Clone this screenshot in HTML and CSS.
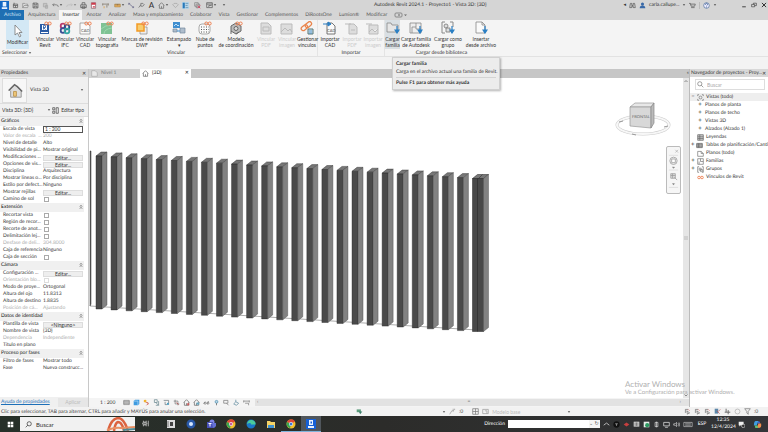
FILE: index.html
```html
<!DOCTYPE html>
<html lang="es">
<head>
  <meta charset="UTF-8">
  <title>Autodesk Revit 2024.1 - Proyecto1 - Vista 3D: {3D}</title>
  <link rel="stylesheet" href="styles.css">
</head>
<body>

  <!-- iconos compartidos -->
  <svg class="sprite" aria-hidden="true">
    <symbol id="chain" viewBox="0 0 8 5"><g fill="none" stroke="#ee8052" stroke-width="1"><circle cx="2.3" cy="2.5" r="1.5"/><circle cx="5.7" cy="2.5" r="1.5"/></g></symbol>
    <symbol id="arrow" viewBox="0 0 6 8"><path d="M3 0v6M1 4l2 3 2-3z" fill="#2a7fc4" stroke="#2a7fc4" stroke-width="1.2"/></symbol>
    <symbol id="caret" viewBox="0 0 4 4"><path d="M0.8 1.2h2.4L2 2.8z" fill="#444"/></symbol>
    <symbol id="fold" viewBox="0 0 4 6"><path d="M1 2.500l1-1 1 1M1 4.500l1-1 1 1" fill="none" stroke="#333" stroke-width=".8"/></symbol>
    <symbol id="slat" viewBox="0 0 12 160" overflow="visible">
      <path d="M0 4L5 0h6L6 4z" fill="#777" stroke="#222" stroke-width=".4"/>
      <path d="M0 4h6v153H0z" fill="#4a4a4a" stroke="#222" stroke-width=".4"/>
      <path d="M6 4l5-4v153l-5 4z" fill="#828282" stroke="#444" stroke-width=".4"/>
    </symbol>
    <symbol id="house" viewBox="0 0 10 10"><path d="M1 5l4-4 4 4M2 4.5V9h6V4.5M5 9V6" fill="none" stroke="#666"/></symbol>
    <symbol id="select" viewBox="0 0 10 10"><path d="M2 2h4M2 2v5M4 4l4 3-2 1-1 1z" fill="none" stroke="#6b6b6b"/><path d="M6 2l2 2" stroke="#d66"/></symbol>
  </svg>

  <header class="titlebar">
    <div class="quick">
      <button class="app" aria-label="Revit"><svg viewBox="0 0 10 10"><path d="M0 0h10v10H0z" fill="#1467c4"/><path d="M3 1h4v5H3zM2 7h6v2H2z" fill="#e8f2ff"/></svg></button>
      <button aria-label="Inicio"><svg viewBox="0 0 10 10"><path d="M2 3h6v5H2zM3 1v3M2 5h6M5 5v3" fill="none" stroke="#555"/></svg></button>
      <button aria-label="Abrir"><svg viewBox="0 0 10 10"><path d="M1 8V2h3l1 1h3v2M1 8l2-3h6L8 8z" fill="#ddd" stroke="#777" stroke-width=".8"/></svg></button>
      <button aria-label="Guardar"><svg viewBox="0 0 10 10"><path d="M1.500 1.500h6l1 1v6h-7zM3 1.500v2.500h4V1.500M3 8.500V6h4v2.500" fill="none" stroke="#555"/></svg></button>
      <button aria-label="Sincronizar" class="faded"><svg viewBox="0 0 10 10"><path d="M2 2h5v5H2zM5 5h3v4H5z" fill="#bbb" stroke="#888"/></svg></button>
      <button aria-label="Deshacer" class="wide"><svg viewBox="0 0 10 10"><path d="M3 2L1 4l2 2M1 4h5q3 0 3 3" fill="none" stroke="#666"/></svg><svg class="caret"><use href="#caret"/></svg></button>
      <button aria-label="Rehacer" class="wide faded"><svg viewBox="0 0 10 10"><path d="M7 2l2 2-2 2M9 4H4Q1 4 1 7" fill="none" stroke="#aaa"/></svg><svg class="caret"><use href="#caret"/></svg></button>
      <button aria-label="Imprimir"><svg viewBox="0 0 10 10"><path d="M3 4V1h4v3M1 4h8v4H1zM3 6h4v3H3z" fill="none" stroke="#555"/></svg></button>
      <button aria-label="PDF"><svg viewBox="0 0 10 10"><path d="M2 1h6v8H2z" fill="#fff" stroke="#8a5560"/><path d="M2 1h6v3H2zM4 6h3v2H4z" fill="#cf3a4b"/></svg></button>
      <button aria-label="Alinear" class="wide"><svg viewBox="0 0 10 10"><path d="M1 2v3M1 3h8M9 2v3M7 4v4" fill="none" stroke="#7a7060"/><path d="M3 6v3" stroke="#e09a30"/></svg></button>
      <button aria-label="Medir" class="wide"><svg viewBox="0 0 10 10"><path d="M1 3h8v4H1z" fill="#f0b45d" stroke="#936c30" stroke-width=".7"/><path d="M3 3v2M5 3v2M7 3v2" stroke="#765"/></svg><svg class="caret"><use href="#caret"/></svg></button>
      <button aria-label="Cota"><svg viewBox="0 0 10 10"><path d="M1 2l7 6M1 4V2h2M6 8h2V6" fill="none" stroke="#668"/></svg></button>
      <button aria-label="Etiqueta"><svg viewBox="0 0 10 10"><path d="M1 8l3-4M4 2h3l2 2-2 2H4z" fill="none" stroke="#666"/></svg></button>
      <button aria-label="Texto" class="letter">A</button>
      <button aria-label="Vista 3D" class="wide"><svg viewBox="0 0 10 10"><use href="#house"/></svg><svg class="caret"><use href="#caret"/></svg></button>
      <button aria-label="Sección"><svg viewBox="0 0 10 10"><path d="M3 2h4l2 2-4 4-4-4z" fill="none" stroke="#999" stroke-width=".8"/></svg></button>
      <button aria-label="Líneas finas" class="on"><svg viewBox="0 0 10 10"><path d="M1 1h3v8H1z" fill="#2878b8"/><path d="M5 2h4M5 5h3M5 8h4" stroke="#5c8bab"/></svg></button>
      <button aria-label="Cerrar inactivas" class="wide"><svg viewBox="0 0 10 10"><path d="M1 1h5v5H1zM3 3h5v5H3z" fill="#ddd" stroke="#666" stroke-width=".8"/><path d="M5 5l4 4M9 5L5 9" stroke="#d35"/></svg></button>
      <button aria-label="Cambiar ventanas"><svg viewBox="0 0 10 10"><path d="M1 1h8v7H1zM1 3h8M4 7V5h4" fill="none" stroke="#555"/></svg><svg class="caret"><use href="#caret"/></svg></button>
      <button aria-label="Personalizar"><svg class="caret"><use href="#caret"/></svg></button>
    </div>
    <h1>Autodesk Revit 2024.1 - Proyecto1 - Vista 3D: {3D}</h1>
    <div class="account">
      <span>◂</span>
      <svg viewBox="0 0 10 10"><path d="M2 2h2v3h2V2h2l1 6H6V6H4v2H1z" fill="none" stroke="#555"/></svg>
      <svg viewBox="0 0 10 10"><circle cx="5" cy="3" r="2.200" fill="#3969a8"/><path d="M1 9q0-4 4-4t4 4z" fill="#3969a8"/></svg>
      <span class="user">carla.callupe...</span>
      <svg class="caret"><use href="#caret"/></svg>
      <svg viewBox="0 0 10 10"><path d="M0 2h2l1 4h5l1-3H2M3 8h5" fill="none" stroke="#555"/></svg>
      <i></i>
      <svg viewBox="0 0 10 10"><circle cx="5" cy="5" r="4" fill="#eef" stroke="#4c6d9a"/><path d="M3.500 4q0-2 1.500-2t1.500 1.500q0 1-1.500 2M5 6.500v1.500" fill="none" stroke="#35588c"/></svg>
      <svg class="caret"><use href="#caret"/></svg>
    </div>
    <div class="window">
      <button aria-label="Minimizar"><svg viewBox="0 0 10 10"><path d="M2 8h6" stroke="#333" stroke-width="1.500"/></svg></button>
      <button aria-label="Restaurar"><svg viewBox="0 0 10 10"><path d="M1 4h5v4H1zM4 4V2h5v4H6" fill="none" stroke="#333"/></svg></button>
      <button aria-label="Cerrar"><svg viewBox="0 0 10 10"><path d="M1.500 1.500l7 7M8.500 1.500l-7 7" stroke="#222" stroke-width="1.500"/></svg></button>
    </div>
  </header>

  <nav class="tabs">
    <a href="#" class="file">Archivo</a>
    <a href="#">Arquitectura</a>
    <a href="#" class="active">Insertar</a>
    <a href="#">Anotar</a>
    <a href="#">Analizar</a>
    <a href="#">Masa y emplazamiento</a>
    <a href="#">Colaborar</a>
    <a href="#">Vista</a>
    <a href="#">Gestionar</a>
    <a href="#">Complementos</a>
    <a href="#">DiRootsOne</a>
    <a href="#">Lumion®</a>
    <a href="#">Modificar</a>
    <a href="#" aria-label="Minimizar cinta"><svg viewBox="0 0 14 6"><rect x="1" y="1" width="7" height="4" rx="1" fill="none" stroke="#777" stroke-width=".8"/><path d="M4 2.500h2v1H4zM10 2.500h3L11.500 4z" fill="#666"/></svg></a>
  </nav>

  <section class="ribbon">
    <div class="panel p-select">
      <div class="tools">
        <button class="modify"><svg viewBox="0 0 14 14"><path d="M4 1v10l2.500-2 2 4 1.500-1-2-3.500h3z" fill="#fff" stroke="#777" stroke-width=".8"/></svg>Modificar</button>
      </div>
      <h2>Seleccionar <svg class="caret"><use href="#caret"/></svg></h2>
    </div>
    <div class="panel p-link">
      <div class="tools">
        <button><svg viewBox="0 0 14 14"><path d="M2 3h9v10H2z" fill="#2b5ca5"/><path d="M4 4h5v5H4zM3 11h7v1H3z" fill="#fff"/><path d="M5.500 8.500v-4h2v2h-2l2 2" fill="none" stroke="#2b5ca5" stroke-width=".8"/><use href="#chain" x="6" y="0" width="8" height="5"/></svg>Vincular<br>Revit</button>
        <button><svg viewBox="0 0 14 14"><g fill="none" stroke-width="1.800"><circle cx="5" cy="5" r="2.300" stroke="#b83a6c"/><circle cx="9" cy="6" r="2.300" stroke="#294f91"/><circle cx="5" cy="9.500" r="2.300" stroke="#3c4f94"/><circle cx="9" cy="10" r="2.300" stroke="#35a5a4"/></g><use href="#chain" x="6" y="0" width="8" height="5"/></svg>Vincular<br>IFC</button>
        <button><svg viewBox="0 0 14 14"><path d="M2 2h7l3 3v8H2z" fill="#fafafa" stroke="#888" stroke-width=".7"/><text x="3" y="11" class="cad">CAD</text><use href="#chain" x="6" y="0" width="8" height="5"/></svg>Vincular<br>CAD</button>
        <button class="w24"><svg viewBox="0 0 14 14"><path d="M1 2h11v11H1z" fill="#7fc294"/><path d="M1 8q4-4 11-4M4 13q0-5 8-6" fill="none" stroke="#a5dcb3" stroke-width=".8"/><use href="#chain" x="6" y="0" width="8" height="5"/></svg>Vincular<br>topografía</button>
        <button class="w46"><svg viewBox="0 0 14 14"><path d="M5 6h7v7H5z" fill="#eee" stroke="#888" stroke-width=".7"/><path d="M2 3h7v7H2z" fill="#f7cd70" stroke="#f39a25" stroke-width="1.500"/><use href="#chain" x="6" y="0" width="8" height="5"/></svg>Marcas de revisión<br>DWF</button>
        <button class="w28"><svg viewBox="0 0 14 14"><path d="M1 1h7v6H1z" fill="#3f8ed0"/><path d="M2 5l2-2 2 2 1-1" stroke="#bfe0f7" fill="none"/><path d="M8 7h5v5H8zM1 8h4v3H1z" fill="#aebdcc" stroke="#73879b" stroke-width=".7"/><path d="M5 10h3" stroke="#3f8ed0"/></svg>Estampado<br>▾</button>
        <button class="w24"><svg viewBox="0 0 14 14"><rect x="1" y="3" width="11" height="10" rx="3" fill="#fafafa" stroke="#888" stroke-width=".7"/><path d="M3 6h8M3 8.500h8M3 11h8" stroke="#555" stroke-dasharray="1 1.500"/><use href="#chain" x="6" y="0" width="8" height="5"/></svg>Nube de<br>puntos</button>
        <button class="w38"><svg viewBox="0 0 14 14"><path d="M2 5l5-3 5 3v5l-5 3-5-3z" fill="#bbb" stroke="#666"/><circle cx="7" cy="7.500" r="2" fill="#ddd" stroke="#666"/><path d="M2 10v3M7 13l3-2" stroke="#666"/><use href="#chain" x="6" y="0" width="8" height="5"/></svg>Modelo<br>de coordinación</button>
        <button class="w22" disabled><svg viewBox="0 0 14 14"><path d="M2 2h7l3 3v8H2zM4 6h6v4H4z" fill="#ddd" stroke="#bbb"/></svg>Vincular<br>PDF</button>
        <button disabled><svg viewBox="0 0 14 14"><path d="M1 3h11v10H1zM1 11l4-4 3 3 2-2 2 3" fill="#ddd" stroke="#bbb"/></svg>Vincular<br>imagen</button>
        <button><svg viewBox="0 0 14 14"><g fill="none" stroke="#e9854c" stroke-width="1.300"><rect x="1" y="5" width="7" height="4" rx="2" transform="rotate(-40 4 7)"/><rect x="5" y="2" width="7" height="4" rx="2" transform="rotate(-40 8 4)"/></g><path d="M8 8h5v5H8z" fill="#cfe0ec" stroke="#577"/><path d="M9 10h3M9 12h3" stroke="#2a7fc4" stroke-width=".7"/></svg>Gestionar<br>vínculos</button>
      </div>
      <h2>Vincular</h2>
    </div>
    <div class="panel p-import">
      <div class="tools">
        <button class="w24"><svg viewBox="0 0 14 14"><path d="M4 2h5l3 3v8H4z" fill="#fafafa" stroke="#555" stroke-width=".8"/><path d="M0 3h6M5 1l3 2-3 2z" stroke="#2a7fc4" fill="#2a7fc4"/><text x="4" y="11" class="cad">CAD</text></svg>Importar<br>CAD</button>
        <button disabled><svg viewBox="0 0 14 14"><path d="M4 3h5l3 3v7H4zM0 3h6M6 9h4" fill="#ddd" stroke="#bbb"/></svg>Importar<br>PDF</button>
        <button class="w22" disabled><svg viewBox="0 0 14 14"><path d="M3 4h9v9H3zM0 3h6M3 11l3-3 3 3 3-3" fill="#ddd" stroke="#bbb"/></svg>Importar<br>imagen</button>
      </div>
      <h2>Importar</h2>
    </div>
    <div class="panel p-load">
      <div class="tools">
        <button class="hover"><svg viewBox="0 0 14 14"><path d="M1 11V2h4l1 2h6v7z" fill="#e6e6e6" stroke="#888" stroke-width=".8"/><use href="#arrow" x="8" y="5" width="6" height="8"/></svg>Cargar<br>familia</button>
        <button class="w32"><svg viewBox="0 0 14 14"><path d="M1 2h11v10H1zM7 2v6h5M3 12V6h4" fill="#eee" stroke="#888" stroke-width=".8"/><use href="#arrow" x="8" y="5" width="6" height="8"/></svg>Cargar familia<br>de Autodesk</button>
        <button class="w32"><svg viewBox="0 0 14 14"><path d="M4 1H1v11h3M9 1h3v5" fill="none" stroke="#888"/><circle cx="5" cy="5" r="2" fill="#ddd" stroke="#777" stroke-width=".8"/><path d="M5 7h4v4H5z" fill="#ddd" stroke="#777" stroke-width=".8"/><use href="#arrow" x="8" y="5" width="6" height="8"/></svg>Cargar como<br>grupo</button>
        <button class="w34"><svg viewBox="0 0 14 14"><path d="M2 1h6l3 3v8H2zM8 1v3h3" fill="#fafafa" stroke="#888" stroke-width=".8"/><use href="#arrow" x="8" y="5" width="6" height="8"/></svg>Insertar<br>desde archivo</button>
      </div>
      <h2>Cargar desde biblioteca</h2>
      <div class="tooltip" role="tooltip">
        <strong>Cargar familia</strong>
        <p>Carga en el archivo actual una familia de Revit.</p>
        <strong>Pulse F1 para obtener más ayuda</strong>
      </div>
    </div>
  </section>

  <div class="options"></div>

  <main>
    <aside class="properties">
      <h2 class="dock">Propiedades <button aria-label="Cerrar propiedades">✕</button></h2>
      <div class="type">
        <svg viewBox="0 0 24 24"><path d="M6 12l6-6 7 6v7H8v-7" fill="#ddd" stroke="#999"/><path d="M6 12l6-6 3 2 5 5" fill="none" stroke="#666" stroke-width="1.500"/><path d="M11 13h3v5h-3z" fill="#f0c878" stroke="#b58a42" stroke-width=".8"/></svg>
        <span>Vista 3D</span>
        <svg class="caret"><use href="#caret"/></svg>
      </div>
      <div class="filter">
        <select aria-label="Vista"><option>Vista 3D: {3D}</option></select>
        <svg class="caret"><use href="#caret"/></svg>
        <button><svg viewBox="0 0 10 10"><path d="M1 1h3v3H1zM1 6h3v3H1zM6 1h3v8H6z" fill="none" stroke="#444"/></svg>Editar tipo</button>
      </div>
      <div class="grid">
        <table>
          <tbody>
            <tr class="group"><th colspan="2">Gráficos<svg><use href="#fold"/></svg></th></tr>
            <tr><th><label for="escala">Escala de vista</label></th><td><input type="text" id="escala" value="1 : 200"></td></tr>
            <tr class="off"><th>Valor de escala &nbsp;...</th><td>200</td></tr>
            <tr><th>Nivel de detalle</th><td>Alto</td></tr>
            <tr><th>Visibilidad de pi...</th><td>Mostrar original</td></tr>
            <tr><th>Modificaciones ...</th><td><button>Editar...</button></td></tr>
            <tr><th>Opciones de vis...</th><td><button>Editar...</button></td></tr>
            <tr><th>Disciplina</th><td>Arquitectura</td></tr>
            <tr><th>Mostrar líneas o...</th><td>Por disciplina</td></tr>
            <tr><th>Estilo por defect...</th><td>Ninguno</td></tr>
            <tr><th>Mostrar rejillas</th><td><button>Editar...</button></td></tr>
            <tr><th><label for="sol">Camino de sol</label></th><td><input type="checkbox" id="sol"></td></tr>
          </tbody>
          <tbody>
            <tr class="group"><th colspan="2">Extensión<svg><use href="#fold"/></svg></th></tr>
            <tr><th><label for="recortar">Recortar vista</label></th><td><input type="checkbox" id="recortar"></td></tr>
            <tr><th><label for="region">Región de recor...</label></th><td><input type="checkbox" id="region"></td></tr>
            <tr><th><label for="recorte">Recorte de anot...</label></th><td><input type="checkbox" id="recorte"></td></tr>
            <tr><th><label for="delim">Delimitación lej...</label></th><td><input type="checkbox" id="delim"></td></tr>
            <tr class="off"><th>Desfase de deli...</th><td>304.8000</td></tr>
            <tr><th>Caja de referencia</th><td>Ninguno</td></tr>
            <tr><th><label for="caja">Caja de sección</label></th><td><input type="checkbox" id="caja"></td></tr>
          </tbody>
          <tbody>
            <tr class="group"><th colspan="2">Cámara<svg><use href="#fold"/></svg></th></tr>
            <tr><th>Configuración ...</th><td><button>Editar...</button></td></tr>
            <tr class="off"><th><label for="orient">Orientación blo...</label></th><td><input type="checkbox" id="orient" disabled></td></tr>
            <tr><th>Modo de proye...</th><td>Ortogonal</td></tr>
            <tr><th>Altura del ojo</th><td>11.8313</td></tr>
            <tr><th>Altura de destino</th><td>1.8835</td></tr>
            <tr class="off"><th>Posición de cá...</th><td>Ajustando</td></tr>
          </tbody>
          <tbody>
            <tr class="group"><th colspan="2">Datos de identidad<svg><use href="#fold"/></svg></th></tr>
            <tr><th>Plantilla de vista</th><td><button>&lt;Ninguno&gt;</button></td></tr>
            <tr><th>Nombre de vista</th><td>{3D}</td></tr>
            <tr class="off"><th>Dependencia</th><td>Independiente</td></tr>
            <tr><th>Título en plano</th><td></td></tr>
          </tbody>
          <tbody>
            <tr class="group"><th colspan="2">Proceso por fases<svg><use href="#fold"/></svg></th></tr>
            <tr><th>Filtro de fases</th><td>Mostrar todo</td></tr>
            <tr><th>Fase</th><td>Nueva construcc...</td></tr>
          </tbody>
        </table>
      </div>
      <div class="apply"><a href="#">Ayuda de propiedades</a><button disabled>Aplicar</button></div>
    </aside>

    <section class="view">
      <div class="doctabs">
        <a href="#"><svg viewBox="0 0 10 10"><path d="M1 1h5l3 3v5H1z" fill="#e8e8e8" stroke="#aaa"/></svg>Nivel 1</a>
        <a href="#" class="active"><svg viewBox="0 0 10 10"><use href="#house"/></svg>{3D}<b>✕</b></a>
        <span>«</span>
      </div>
      <div class="stage">
        <div class="canvas">
          <!-- lamas: paso de 15 px en planta, caída de casi 1 px por lama -->
          <svg class="model" viewBox="0 0 594 320" preserveAspectRatio="xMinYMin meet">
            <path d="M1 228L388 252" stroke="#888" stroke-width=".7"/>
            <path d="M1 73h1v153l-1 2z" fill="#666" stroke="#333" stroke-width=".5"/>
            <g id="slats"></g>
            <path d="M383.500 100.500l5-4h11l-5 4z" fill="#777" stroke="#222" stroke-width=".5"/>
            <path d="M383.500 100.500h11v153h-11zM388.500 100.500v153M389.500 100.500l4-4" fill="#484848" stroke="#222" stroke-width=".5"/>
            <path d="M394.500 100.500l5-4v153l-5 4z" fill="#828282" stroke="#444" stroke-width=".4"/>
          </svg>
          <svg class="cube" viewBox="0 0 56 40">
            <ellipse cx="28" cy="25" rx="26" ry="9" fill="none" stroke="#ccc" stroke-width="3"/>
            <ellipse cx="28" cy="25" rx="26" ry="9" fill="none" stroke="#f7f7f7" stroke-width="2"/>
            <path d="M15 7l5-4h19l-3 4z" fill="#e8e8e8" stroke="#999" stroke-width=".7"/>
            <path d="M15 7h21v21l-21-2z" fill="#d8d8d8" stroke="#999" stroke-width=".7"/>
            <path d="M36 7l3-4v20l-3 5z" fill="#bbb" stroke="#888" stroke-width=".7"/>
            <text x="17" y="18">FRONTAL</text>
            <path d="M4 22l4-1M17 34l4 1M49 27l4-1" stroke="#999"/>
          </svg>
          <div class="navbar">
            <svg viewBox="0 0 12 46"><path d="M8 1l3 3M11 1L8 4" stroke="#aaa" stroke-width=".7"/><path d="M1 7h10M1 23h10M1 42h10" stroke="#d5d5d5" stroke-width=".7"/><circle cx="6" cy="13" r="4" fill="#eee" stroke="#aaa"/><path d="M4 11h4v4H4z" fill="#fff" stroke="#aaa"/><path d="M5 20h2l-1 1zM5 38h2l-1 1z" stroke="#999"/><path d="M3 27h5v5H3zM3 29h5M5 27v5M7 31l3 3" fill="#ddd" stroke="#999" stroke-width=".8"/></svg>
          </div>
          <div class="watermark"><b>Activar Windows</b>Ve a Configuración para activar Windows.</div>
        </div>
        <div class="vscroll">
          <svg viewBox="0 0 6 6"><path d="M1.500 4L3 2.500 4.500 4" fill="none" stroke="#888"/></svg>
          <svg viewBox="0 0 6 6"><path d="M2 1v4M4 1v4" stroke="#aaa" stroke-width=".7"/></svg>
          <svg viewBox="0 0 6 6"><path d="M1.500 2.500L3 4l1.500-1.500" fill="none" stroke="#888"/></svg>
        </div>
      </div>
      <div class="viewbar">
        <span class="scale">1 : 200</span>
        <button aria-label="Nivel de detalle"><svg viewBox="0 0 10 10"><path d="M1 2h8v6H1zM1 4h8M1 6h8" fill="#ddd" stroke="#666" stroke-width=".8"/></svg></button>
        <button aria-label="Estilo visual"><svg viewBox="0 0 10 10"><path d="M1 3l2-2h6v6L7 9H1z" fill="#3e9be0"/><path d="M1 3h6v6" fill="none" stroke="#b5ddf8"/></svg></button>
        <button aria-label="Camino de sol"><svg viewBox="0 0 10 10"><circle cx="3" cy="3" r="2" fill="#f2b22e"/><path d="M4 5h3v3M8 6l-3 3" stroke="#c54" fill="none"/></svg></button>
        <button aria-label="Sombras"><svg viewBox="0 0 10 10"><path d="M2 1h4v4H2zM4 5l4 4M8 3v6H4" fill="none" stroke="#67858e"/></svg></button>
        <button aria-label="Recortar vista"><svg viewBox="0 0 10 10"><path d="M1 2h7v6M3 4v4h3" fill="none" stroke="#6a767d"/><circle cx="7" cy="7" r="1.500" fill="#48a0c4"/></svg></button>
        <button aria-label="Región"><svg viewBox="0 0 10 10"><path d="M3 1v6h6M1 3h6v6" fill="none" stroke="#777"/><path d="M5 5l3 3" stroke="#c44"/></svg></button>
        <button aria-label="Bloquear"><svg viewBox="0 0 10 10"><use href="#house"/><path d="M6 6h3v3H6z" fill="#c95b5b"/></svg></button>
        <button aria-label="Ocultar"><svg viewBox="0 0 10 10"><use href="#house"/><path d="M5 5h4v3H5z" fill="#66a8c0"/></svg></button>
        <button aria-label="Gafas"><svg viewBox="0 0 10 10"><path d="M1 7l2-3M6 7l2-4" stroke="#777"/><circle cx="3" cy="6" r="1.500" fill="none" stroke="#777"/><circle cx="7" cy="6" r="1.500" fill="none" stroke="#777"/></svg></button>
        <button aria-label="Revelar"><svg viewBox="0 0 10 10"><circle cx="5" cy="4" r="2" fill="#bdd9e8" stroke="#4a8eb0"/><path d="M5 6v3" stroke="#555"/></svg></button>
        <button aria-label="Propiedades temporales"><svg viewBox="0 0 10 10"><path d="M1 2h6v4H1zM5 6l3 3" fill="none" stroke="#777"/></svg></button>
        <button aria-label="Modelo analítico"><svg viewBox="0 0 10 10"><path d="M1 7l3-3 4 2-3 3zM4 4V1" fill="none" stroke="#58859b"/></svg></button>
        <button aria-label="Restricciones"><svg viewBox="0 0 10 10"><path d="M1 2v3M9 2v3M1 3h8M3 6h5v3" fill="none" stroke="#777"/></svg></button>
        <div class="hscroll"><span>‹</span><span>=</span><span>›</span></div>
      </div>
    </section>

    <aside class="browser">
      <h2 class="dock">Navegador de proyectos - Proy... <button aria-label="Cerrar navegador">✕</button></h2>
      <label class="find"><svg viewBox="0 0 10 10"><circle cx="4" cy="4" r="3" fill="none" stroke="#777"/><path d="M6 6l3 3" stroke="#777"/></svg><input type="text" placeholder="Buscar" aria-label="Buscar"></label>
      <ul>
        <li class="sel"><i>−</i><svg viewBox="0 0 10 10"><path d="M3 1H1v2M7 1h2v2M3 9H1V7M7 9h2V7" fill="none" stroke="#777"/><circle cx="5" cy="5" r="2" fill="none" stroke="#777"/></svg>Vistas (todo)</li>
        <li class="sub"><i>+</i>Planos de planta</li>
        <li class="sub"><i>+</i>Planos de techo</li>
        <li class="sub"><i>+</i>Vistas 3D</li>
        <li class="sub"><i>+</i>Alzados (Alzado 1)</li>
        <li><i></i><svg viewBox="0 0 10 10"><path d="M1 1h8v8H1zM1 4h8M1 6.500h8M4 1v8" fill="#ccc" stroke="#666"/></svg>Leyendas</li>
        <li><i>+</i><svg viewBox="0 0 10 10"><path d="M1 2h8v6H1zM1 4h8M1 6h8M4 2v6" fill="#ddd" stroke="#555"/></svg>Tablas de planificación/Canti</li>
        <li><i></i><svg viewBox="0 0 10 10"><path d="M1 2h5l3 3v4H1zM6 2v3h3" fill="#fff" stroke="#777"/></svg>Planos (todo)</li>
        <li><i>+</i><svg viewBox="0 0 10 10"><path d="M1 1h8v8H1zM5 1v4h4M3 9V5" fill="none" stroke="#777"/></svg>Familias</li>
        <li><i>+</i><svg viewBox="0 0 10 10"><path d="M3 1H1v8h2M7 1h2v8H7" fill="none" stroke="#777"/><path d="M3 3h3v3H3zM5 5h3v3H5z" fill="#ddd" stroke="#777" stroke-width=".8"/></svg>Grupos</li>
        <li><i></i><svg viewBox="0 0 8 5"><use href="#chain"/></svg>Vínculos de Revit</li>
      </ul>
    </aside>
  </main>

  <div class="status">
    <p>Clic para seleccionar, TAB para alternar, CTRL para añadir y MAYÚS para anular una selección.</p>
    <svg viewBox="0 0 10 10"><path d="M1 2h6v4H1z" fill="#5c9c7c"/><path d="M4 5h5L6 9z" fill="#3b7d6a"/></svg>
    <div class="worksets">
      <svg class="caret"><use href="#caret"/></svg>
      <svg viewBox="0 0 10 10"><path d="M1 9l3-5M4 4h3M6 1v4M8 1v2" fill="none" stroke="#999"/></svg><span>:0</span>
      <svg class="first" viewBox="0 0 10 10"><path d="M1 1h8v8H1zM1 5h8M5 1v8" fill="none" stroke="#777"/></svg>
      <svg viewBox="0 0 10 10"><path d="M1 2h8v6H1zM4 4h3v4" fill="none" stroke="#999"/></svg>
      <select aria-label="Opción de diseño" disabled><option>Modelo base</option></select>
      <svg class="caret"><use href="#caret"/></svg>
    </div>
    <div class="picks">
      <svg viewBox="0 0 10 10"><use href="#select"/></svg>
      <svg viewBox="0 0 10 10"><use href="#select"/></svg>
      <svg viewBox="0 0 10 10"><use href="#select"/></svg>
      <svg viewBox="0 0 10 10"><path d="M1 1h5v7H1z" fill="#5b86a8"/><path d="M4 4l4 4M9 2L6 5" stroke="#b55"/></svg>
      <svg viewBox="0 0 10 10"><path d="M3 1v5H1M3 6h6M6 3v6" fill="none" stroke="#666" stroke-width="1.300"/></svg>
      <svg viewBox="0 0 10 10"><circle cx="5" cy="5" r="3.500" fill="none" stroke="#aaa"/></svg>
      <svg viewBox="0 0 10 10"><path d="M1 1h8L6 5v4L4 7V5z" fill="none" stroke="#777"/></svg><span>:0</span>
    </div>
  </div>

  <footer class="taskbar">
    <button class="start" aria-label="Inicio"><svg viewBox="0 0 10 10"><path d="M1 1h3.600v3.600H1zM5.400 1H9v3.600H5.400zM1 5.400h3.600V9H1zM5.400 5.400H9V9H5.400z" fill="#fff"/></svg></button>
    <label class="search">
      <svg viewBox="0 0 10 10"><circle cx="6" cy="4" r="3" fill="none" stroke="#333"/><path d="M4 6L1 9" stroke="#333"/></svg>
      <input type="text" placeholder="Buscar" aria-label="Buscar en Windows">
      <svg class="bridge" viewBox="0 0 30 14"><path d="M2 14Q5 2 12 1q6 0 10 13M8 14q1-8 4-9 4 0 6 9" fill="none" stroke="#db6340" stroke-width="2.500"/><path d="M1 13q9-3 14-2l14-1" fill="none" stroke="#e89064" stroke-width="2"/><path d="M17 13l12-1" stroke="#4e8a95" stroke-width="2"/></svg>
    </label>
    <div class="apps">
      <button aria-label="Vista de tareas"><svg viewBox="0 0 10 10"><path d="M2 1v2h4V1M2 9V7h4v2M1 4h6v2H1zM9 1v8" fill="none" stroke="#ddd"/></svg></button>
      <button aria-label="Notas"><svg viewBox="0 0 10 10"><path d="M1 1h8v8H1z" fill="#ddd"/><path d="M4 3h3v4H4z" fill="#444"/><path d="M2 2v6" stroke="#777"/></svg></button>
      <button aria-label="Cámara"><svg viewBox="0 0 10 10"><circle cx="5" cy="5" r="4.500" fill="#2858a8"/><circle cx="5" cy="5" r="2" fill="#d6e8ff"/></svg></button>
      <button aria-label="Teams"><svg viewBox="0 0 10 10"><circle cx="6" cy="3" r="2.500" fill="#7f86e8"/><path d="M1 3h6v6H1z" fill="#4850b8"/><path d="M6 4h4v3q-1 2-3 2z" fill="#6470d4"/><path d="M2.500 4.500h3M4 4.500v3" stroke="#fff"/></svg></button>
      <button aria-label="Chrome perfil"><svg viewBox="0 0 10 10"><circle cx="5" cy="5" r="4.500" fill="#f2bd2b"/><path d="M1 3a4.500 4.500 0 018-.5L5 5z" fill="#e04838"/><path d="M1 3a4.500 4.500 0 003 6.300L5 5z" fill="#39a852"/><circle cx="5" cy="5" r="2" fill="#fff"/><circle cx="5" cy="5" r="1.500" fill="#c65f9c"/></svg></button>
      <button aria-label="Edge"><svg viewBox="0 0 10 10"><circle cx="5" cy="5" r="4.500" fill="#1a78c8"/><path d="M1 5q1-4.500 5-4 4 1 3.500 4.500H5Q5 3 1 5z" fill="#4acb9b"/></svg></button>
      <button aria-label="Explorador"><svg viewBox="0 0 10 10"><path d="M1 2h3l1 1h4v6H1z" fill="#f5d366"/><path d="M2 6h6v3H2z" fill="#3f91d1"/></svg></button>
      <button aria-label="Chrome" class="open"><svg viewBox="0 0 10 10"><circle cx="5" cy="5" r="4.500" fill="#f2bd2b"/><path d="M1 3a4.500 4.500 0 018-.5L5 5z" fill="#e04838"/><path d="M1 3a4.500 4.500 0 003 6.300L5 5z" fill="#39a852"/><circle cx="5" cy="5" r="2" fill="#fff"/><circle cx="5" cy="5" r="1.500" fill="#3b78d8"/></svg></button>
      <button aria-label="Revit" class="open current"><svg viewBox="0 0 10 10"><path d="M0 0h10v10H0z" fill="#1660d6"/><path d="M3 1h4v5H3zM2 7h6v2H2z" fill="#eaf3ff"/><path d="M4.500 2.500h1.500v2H4.500z" fill="#1660d6"/></svg></button>
    </div>
    <label class="address">Dirección <input type="text"><span>⌄ ↻</span></label>
    <div class="tray">
      <svg viewBox="0 0 10 10"><path d="M1 6l4-3 4 3" fill="none" stroke="#eee"/></svg>
      <svg viewBox="0 0 10 10"><circle cx="5" cy="5" r="4.500" fill="#111"/><path d="M3 4h4M5 4v3" stroke="#aaa"/></svg>
      <svg viewBox="0 0 10 10"><path d="M1 5l4-3 4 3-4 3z" fill="#c63f3f"/></svg>
      <svg viewBox="0 0 10 10"><path d="M1 1h8v7H1z" fill="#ddd"/><path d="M3 2v5M5 2v5M7 2v5" stroke="#555"/></svg>
      <svg viewBox="0 0 10 10"><path d="M1 1h8v8H1z" fill="#e6eee8"/><circle cx="6" cy="6" r="3" fill="#2d9961"/></svg>
      <svg viewBox="0 0 10 10"><path d="M3 2h4v6H3zM5 1v8" fill="none" stroke="#ddd"/></svg>
      <svg viewBox="0 0 10 10"><path d="M1 2h8v5H1zM3 9h4" fill="none" stroke="#eee"/></svg>
      <svg viewBox="0 0 10 10"><path d="M1 4h2l2-2v6L3 6H1zM7 3q2 2 0 4M8.500 2q2 3 0 6" fill="none" stroke="#eee" stroke-width=".8"/></svg>
      <svg class="keys" viewBox="0 0 14 10"><path d="M1 2h12v6H1zM3 4h8M3 6h8" fill="none" stroke="#ddd" stroke-width=".8"/></svg>
      <span>ESP</span>
      <time>12:35<br>12/4/2024</time>
      <svg viewBox="0 0 10 10"><path d="M1 1h7v5H4L2 8V6H1z" fill="#eee"/><circle cx="7.500" cy="7" r="2.500" fill="#333" stroke="#eee" stroke-width=".8"/></svg>
      <svg class="copilot" viewBox="0 0 10 10"><path d="M3 1h3L4 6H1q0-5 2-5z" fill="#3e9de0"/><path d="M6 1q2 0 2 3H5z" fill="#4562d0"/><path d="M2 6h3l1 3H4Q2 9 2 6z" fill="#62c070"/><path d="M6 4h3q1 5-3 5L5 7z" fill="#f08e4a"/></svg>
    </div>
  </footer>

  <script src="script.js"></script>
</body>
</html>
```
FILE: styles.css
```css
* {
  box-sizing: border-box;
}

body {
  margin: 0;
  min-height: 100vh;
  display: flex;
  flex-direction: column;
  font-family: Lato, "Open Sans", sans-serif;
  font-size: 5px;
  line-height: 6px;
  color: #333;
  background: #f0f0f0;
  text-rendering: geometricPrecision;
  overflow: hidden;
}

h1, h2, p, ul {
  margin: 0;
  padding: 0;
  font-size: 5px;
  font-weight: normal;
  list-style: none;
}

button, input, select {
  font: inherit;
  color: inherit;
  margin: 0;
  padding: 0;
  border: 0;
  background: none;
}

select {
  appearance: none;
}

a {
  color: inherit;
  text-decoration: none;
}

svg {
  display: block;
  flex: none;
  width: 7px;
  height: 7px;
}

.sprite {
  position: absolute;
  width: 0;
  height: 0;
}

.caret {
  width: 4px;
  height: 4px;
}

/* barra de título */
.titlebar {
  display: grid;
  grid-template-columns: 374px 1fr auto auto;
  align-items: center;
  height: 10px;
  background: #d5d5d5;
}

.quick, .quick button, .account, .window {
  display: flex;
  align-items: center;
}

.quick {
  gap: 3px;
}

.quick button {
  min-width: 7px;
  justify-content: center;
}

.quick .app svg {
  width: 9px;
  height: 9px;
}

.quick .wide {
  min-width: 11px;
}

.quick .letter {
  font-size: 8px;
}

.quick .on {
  background: #b8d5e8;
}

.faded {
  opacity: .6;
}

.account {
  gap: 3px;
  margin-right: 24px;
}

.account .user {
  width: 30px;
}

.account i {
  height: 7px;
  border-left: 1px solid #bbb;
}

.window {
  gap: 4px;
  margin-right: 1px;
}

.window svg {
  width: 6px;
  height: 6px;
}

/* pestañas de la cinta */
.tabs {
  display: flex;
  align-items: center;
  height: 10px;
  line-height: 10px;
  background: #d5d5d5;
  color: #555;
}

.tabs a {
  padding: 0 3px 0 4px;
}

.tabs .file {
  width: 24px;
  text-align: center;
  background: #1f6fb2;
  color: #dcecf8;
}

.tabs .active {
  background: #f5f5f5;
  color: #222;
}

.tabs svg {
  width: 14px;
  height: 6px;
}

/* cinta */
.ribbon {
  display: flex;
  height: 37px;
  background: #f4f4f4;
  border-bottom: 1px solid #e2e2e2;
}

.panel {
  position: relative;
}

.panel h2 {
  text-align: center;
  line-height: 8px;
  white-space: nowrap;
}

.tools {
  display: flex;
  height: 29px;
}

.tools button {
  flex: none;
  width: 20px;
  text-align: center;
  white-space: nowrap;
}

.tools svg {
  width: 14px;
  height: 14px;
  margin: 0 auto 1px;
}

.tools button:disabled {
  color: #ccc;
}

.tools .modify {
  width: 23px;
  background: #d3e8f5;
}

.tools .hover {
  width: 15px;
  background: #d9dfe3;
}

.tools .w22 { width: 22px; }
.tools .w24 { width: 24px; }
.tools .w28 { width: 28px; }
.tools .w32 { width: 32px; }
.tools .w34 { width: 34px; }
.tools .w38 { width: 38px; }
.tools .w46 { width: 46px; }

.p-select {
  width: 35px;
  padding-left: 6px;
}

.p-select h2 {
  display: flex;
  align-items: center;
  gap: 1px;
  margin-left: -4px;
}

.p-link, .p-import {
  border-right: 1px solid #e4e4e4;
}

.cad {
  font-size: 4px;
  fill: #555;
}

.tooltip {
  position: absolute;
  top: 37px;
  left: 7px;
  z-index: 2;
  width: 108px;
  padding: 3px;
  background: #ececec;
  border: 1px solid #d0d0d0;
  box-shadow: 1px 1px 2px rgba(0,0,0,0.3);
  white-space: nowrap;
}

.tooltip strong {
  display: block;
}

.tooltip p {
  padding: 2px 0;
  margin-bottom: 2px;
  border-bottom: 1px solid #d4d4d4;
}

.options {
  height: 12px;
  background: #f3f3f3;
}

/* zona de trabajo */
main {
  flex: 1;
  display: grid;
  grid-template-columns: 89px 1fr 79px;
  min-height: 0;
}

.dock {
  display: flex;
  justify-content: space-between;
  height: 8px;
  padding: 0 2px 0 1px;
  line-height: 8px;
  white-space: nowrap;
  background: #d8d8d8;
}

.properties {
  display: flex;
  flex-direction: column;
  background: #f0f0f0;
  border-right: 1px solid #c8c8c8;
}

.type {
  display: flex;
  align-items: center;
  gap: 3px;
  height: 27px;
  padding: 0 4px 0 2px;
  border-bottom: 1px solid #ddd;
}

.type svg:first-child {
  width: 25px;
  height: 25px;
  background: #f7f7f7;
  border: 1px solid #ddd;
}

.type span {
  flex: 1;
}

.filter {
  display: flex;
  align-items: center;
  height: 12px;
  padding: 0 4px 0 2px;
}

.filter select {
  width: 45px;
}

.filter button {
  display: flex;
  align-items: center;
  gap: 2px;
  margin-left: auto;
  white-space: nowrap;
}

.grid {
  flex: 1;
  padding-right: 4px;
  background: #fff;
  border-top: 1px solid #ddd;
}

.grid table {
  width: 100%;
  table-layout: fixed;
  border-collapse: collapse;
}

.grid th, .grid td {
  height: 7px;
  padding: 0 0 0 3px;
  font-weight: normal;
  line-height: 7px;
  text-align: left;
  white-space: nowrap;
}

.grid td {
  padding: 0 1px;
}

.grid .group th {
  height: 9px;
  padding-left: 1px;
  line-height: 9px;
  color: #111;
  background: #f0f0f0;
}

.group svg {
  float: right;
  width: 4px;
  height: 6px;
  margin: 1px 1px 0 0;
}

.grid .off {
  color: #aaa;
}

.grid td button {
  display: block;
  width: 100%;
  height: 6px;
  line-height: 4px;
  background: #eee;
  border: 1px solid #ddd;
}

.grid input {
  display: block;
  height: 7px;
}

.grid input[type="text"] {
  width: 100%;
  padding-left: 1px;
  border: 1px solid #555;
}

.grid input[type="checkbox"] {
  appearance: none;
  width: 5px;
  height: 5px;
  margin-left: 1px;
  border: 1px solid #aaa;
}

.grid input[type="checkbox"]:disabled {
  border-color: #ddd;
}

.apply {
  display: flex;
  justify-content: space-between;
  align-items: center;
  height: 10px;
  padding-left: 1px;
}

.apply a {
  color: #1c6fb8;
  text-decoration: underline;
}

.apply button {
  width: 30px;
  height: 9px;
  color: #bbb;
  background: #e6e6e6;
}

/* vista */
.view {
  display: flex;
  flex-direction: column;
  min-width: 0;
}

.doctabs {
  display: flex;
  height: 9px;
  line-height: 9px;
  background: #c6c6c6;
}

.doctabs a {
  display: flex;
  align-items: center;
  gap: 3px;
  width: 51px;
  padding: 0 2px;
  color: #777;
  background: #d2d2d2;
}

.doctabs .active {
  color: #222;
  background: #fff;
}

.doctabs b, .doctabs span {
  margin-left: auto;
  font-weight: normal;
}

.stage {
  flex: 1;
  display: flex;
  min-height: 0;
}

.canvas {
  position: relative;
  flex: 1;
  background: #fff;
}

.model {
  width: 100%;
  height: 100%;
}

.cube {
  position: absolute;
  top: 22px;
  right: 12px;
  width: 56px;
  height: 40px;
}

.cube text {
  font-size: 4px;
  fill: #666;
}

.navbar {
  position: absolute;
  top: 68px;
  right: 2px;
  padding: 0 1px;
  background: #f6f6f6;
  border: 1px solid #bbb;
  border-radius: 2px;
}

.navbar svg {
  width: 11px;
  height: 46px;
}

.watermark {
  position: absolute;
  right: -54px;
  bottom: 1px;
  z-index: 1;
  width: 112px;
  font-size: 6px;
  line-height: 8px;
  color: #b0b0b0;
  white-space: nowrap;
}

.watermark b {
  display: block;
  font-size: 8px;
  font-weight: normal;
  line-height: 10px;
}

.vscroll {
  display: flex;
  flex-direction: column;
  justify-content: space-between;
  width: 6px;
  background: #e6e6e6;
}

.vscroll svg {
  width: 6px;
  height: 6px;
}

.viewbar {
  display: flex;
  align-items: center;
  gap: 3px;
  height: 9px;
  background: #f4f4f4;
}

.viewbar button {
  width: 7px;
}

.viewbar .scale {
  width: 31px;
  padding-left: 11px;
  white-space: nowrap;
}

.hscroll {
  flex: 1;
  display: flex;
  justify-content: space-between;
  height: 7px;
  margin-left: 2px;
  padding: 0 8px 0 2px;
  color: #777;
  background: #e2e2e2;
}

/* navegador de proyectos */
.browser {
  min-width: 0;
  overflow: hidden;
  background: #fff;
  border-left: 1px solid #bbb;
}

.find {
  display: flex;
  align-items: center;
  gap: 3px;
  height: 11px;
  margin: 2px 3px 3px 5px;
  padding-left: 1px;
  border: 1px solid #ddd;
}

.find input {
  width: 50px;
}

.find input::placeholder {
  color: #aaa;
}

.browser li {
  display: flex;
  align-items: center;
  gap: 2px;
  height: 8px;
  padding-left: 1px;
  line-height: 8px;
  white-space: nowrap;
}

.browser li i {
  width: 4px;
  font-size: 6px;
  font-style: normal;
  text-align: center;
}

.browser .sel {
  background: #eee;
}

.browser .sub {
  gap: 3px;
  padding-left: 8px;
}

/* barra de estado */
.status {
  display: grid;
  grid-template-columns: 355px 86px 1fr 84px;
  align-items: center;
  height: 9px;
  padding-left: 1px;
  color: #444;
  background: #f2f2f2;
}

.worksets, .picks {
  display: flex;
  align-items: center;
  gap: 3px;
}

.worksets .first {
  margin-left: 6px;
}

.worksets select {
  width: 72px;
  opacity: 1;
  color: #bbb;
}

/* barra de tareas */
.taskbar {
  display: flex;
  align-items: center;
  height: 16px;
  color: #fff;
  background: linear-gradient(90deg, #263029, #2c2c2a 50%, #333538);
}

.start {
  display: grid;
  place-items: center;
  width: 20px;
}

.search {
  display: flex;
  align-items: center;
  gap: 4px;
  width: 115px;
  height: 14px;
  padding-left: 5px;
  background: #f1f1f1;
  color: #333;
}

.search input {
  width: 66px;
  font-size: 6px;
}

.search input::placeholder {
  color: #333;
}

.bridge {
  width: 30px;
  height: 14px;
}

.apps {
  display: flex;
}

.apps button {
  display: grid;
  place-items: center;
  width: 20px;
  height: 16px;
  border-bottom: 1px solid transparent;
}

.apps svg {
  width: 10px;
  height: 10px;
}

.apps button:first-child {
  margin-right: 6px;
}

.apps button:first-child svg {
  width: 7px;
  height: 7px;
}

.apps .open {
  border-color: #7fb4dc;
}

.apps .current {
  background: #50565c;
}

.address {
  display: flex;
  align-items: center;
  gap: 3px;
  margin-left: auto;
}

.address input {
  width: 81px;
  height: 8px;
  background: #fff;
}

.address span {
  width: 11px;
  height: 8px;
  margin-left: -3px;
  line-height: 8px;
  color: #555;
  background: #f5f5f5;
}

.tray {
  display: flex;
  align-items: center;
  gap: 3px;
  padding: 0 6px 0 3px;
}

.tray .keys {
  width: 10px;
}

.tray span {
  width: 12px;
  text-align: center;
}

.tray time {
  width: 24px;
  line-height: 7px;
  text-align: center;
}

.tray .copilot {
  width: 9px;
  height: 9px;
  margin-left: 5px;
}
```
FILE: script.js
```js
const slats = document.getElementById("slats");
for (let i = 0; i < 25; i++) {
  const use = document.createElementNS("http://www.w3.org/2000/svg", "use");
  use.setAttribute("href", "#slat");
  use.setAttribute("x", 7 + i * 15.06);
  use.setAttribute("y", 74 + i * 0.9);
  use.setAttribute("width", 12);
  use.setAttribute("height", 160);
  slats.appendChild(use);
}
```
